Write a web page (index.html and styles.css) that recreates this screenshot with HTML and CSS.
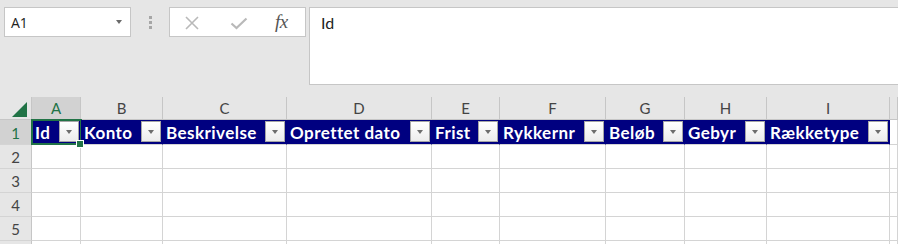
FILE: index.html
```html
<!DOCTYPE html>
<html>
<head>
<meta charset="utf-8">
<link rel="stylesheet" href="styles.css">
</head>
<body>
<div class="app">
  <div class="toolbar">
    <div class="namebox">
      <span class="nb-text">A1</span>
      <span class="caret"></span>
    </div>
    <div class="grip"><i></i><i></i><i></i></div>
    <div class="fxbox">
      <svg class="ico" width="16" height="14" viewBox="0 0 16 14"><path d="M2 1 L14 13 M14 1 L2 13" stroke="#b9b9b9" stroke-width="1.6" fill="none"/></svg>
      <svg class="ico" width="18" height="13" viewBox="0 0 18 13"><path d="M1.5 6.5 L6.5 11 L16.5 1.5" stroke="#b9b9b9" stroke-width="2.2" fill="none"/></svg>
      <span class="fx">fx</span>
    </div>
    <div class="formula"><span class="ftext">Id</span></div>
  </div>

  <div class="sheet">
    <div class="corner"><span class="tri"></span></div>
    <div class="ch sel">A</div>
    <div class="ch">B</div>
    <div class="ch">C</div>
    <div class="ch">D</div>
    <div class="ch">E</div>
    <div class="ch">F</div>
    <div class="ch">G</div>
    <div class="ch">H</div>
    <div class="ch">I</div>
    <div class="ch last"></div>

    <div class="rh sel r1">1</div>
    <div class="th active"><span>Id</span><span class="filter"><b></b></span><span class="selbox"></span><span class="handle"></span></div>
    <div class="th"><span>Konto</span><span class="filter"><b></b></span></div>
    <div class="th"><span>Beskrivelse</span><span class="filter"><b></b></span></div>
    <div class="th"><span>Oprettet dato</span><span class="filter"><b></b></span></div>
    <div class="th"><span>Frist</span><span class="filter"><b></b></span></div>
    <div class="th"><span>Rykkernr</span><span class="filter"><b></b></span></div>
    <div class="th"><span>Beløb</span><span class="filter"><b></b></span></div>
    <div class="th"><span>Gebyr</span><span class="filter"><b></b></span></div>
    <div class="th"><span>Rækketype</span><span class="filter"><b></b></span></div>
    <div class="c r1c"></div>

    <div class="rh">2</div><div class="c"></div><div class="c"></div><div class="c"></div><div class="c"></div><div class="c"></div><div class="c"></div><div class="c"></div><div class="c"></div><div class="c"></div><div class="c"></div>
    <div class="rh">3</div><div class="c"></div><div class="c"></div><div class="c"></div><div class="c"></div><div class="c"></div><div class="c"></div><div class="c"></div><div class="c"></div><div class="c"></div><div class="c"></div>
    <div class="rh">4</div><div class="c"></div><div class="c"></div><div class="c"></div><div class="c"></div><div class="c"></div><div class="c"></div><div class="c"></div><div class="c"></div><div class="c"></div><div class="c"></div>
    <div class="rh">5</div><div class="c"></div><div class="c"></div><div class="c"></div><div class="c"></div><div class="c"></div><div class="c"></div><div class="c"></div><div class="c"></div><div class="c"></div><div class="c"></div>
    <div class="rh"></div><div class="c"></div><div class="c"></div><div class="c"></div><div class="c"></div><div class="c"></div><div class="c"></div><div class="c"></div><div class="c"></div><div class="c"></div><div class="c"></div>
  </div>
</div>
</body>
</html>
```

FILE: styles.css
```css
html, body {
  margin: 0;
  padding: 0;
  background: #e6e6e6;
}
.app {
  width: 898px;
  height: 244px;
  overflow: hidden;
  background: #e6e6e6;
}
.toolbar {
  height: 97px;
  box-sizing: border-box;
  padding: 7px 0 0 4px;
  display: flex;
  align-items: flex-start;
}
.namebox {
  width: 127px;
  height: 30px;
  box-sizing: border-box;
  background: #fff;
  border: 1px solid #c6c6c6;
  display: flex;
  align-items: center;
  justify-content: space-between;
  padding: 0 8px 0 6px;
}
.nb-text {
  font-family: "Open Sans", "Liberation Sans", sans-serif;
  font-size: 14px;
  color: #222;
  padding-top: 1px;
}
.caret {
  width: 0;
  height: 0;
  border-left: 3.5px solid transparent;
  border-right: 3.5px solid transparent;
  border-top: 4px solid #6a6a6a;
}
.grip {
  width: 38px;
  height: 30px;
  display: flex;
  flex-direction: column;
  align-items: center;
  justify-content: center;
  gap: 2px;
}
.grip i {
  display: block;
  width: 3px;
  height: 3px;
  background: #a6a6a6;
}
.fxbox {
  width: 137px;
  height: 30px;
  box-sizing: border-box;
  background: #fff;
  border: 1px solid #c6c6c6;
  display: flex;
  align-items: center;
  padding: 0 0 0 14px;
}
.fxbox .ico:first-child { margin-right: 30px; margin-top: 2px; }
.fxbox .ico:nth-child(2) { margin-right: 27px; margin-top: 3px; }
.fx {
  font-family: "Liberation Serif", "DejaVu Serif", serif;
  font-style: italic;
  font-size: 19px;
  color: #555;
  letter-spacing: -0.5px;
}
.formula {
  margin-left: 3px;
  flex: 1;
  height: 78px;
  box-sizing: border-box;
  background: #fff;
  border: 1px solid #c6c6c6;
  border-right: none;
  padding: 5px 0 0 11px;
}
.ftext {
  font-family: "Lato", "Liberation Sans", sans-serif;
  font-size: 16px;
  color: #222;
}

.sheet {
  display: grid;
  grid-template-columns: 32px 49px 82px 124px 145px 68px 106px 79px 82px 123px 1fr;
  grid-template-rows: 23px 25px 24px 24px 24px 24px 24px;
  font-family: "Lato", "Liberation Sans", sans-serif;
  background: #fff;
}
.sheet > div {
  box-sizing: border-box;
  border-right: 1px solid #d4d4d4;
  border-bottom: 1px solid #d4d4d4;
}
.corner {
  background: #e6e6e6;
  position: relative;
  border-right-color: #c6c6c6 !important;
  border-bottom-color: #c6c6c6 !important;
}
.tri {
  position: absolute;
  right: 4px;
  bottom: 2px;
  width: 0;
  height: 0;
  border-left: 15px solid transparent;
  border-bottom: 15px solid #217346;
}
.ch {
  background: #e6e6e6;
  border-right-color: #c6c6c6 !important;
  border-bottom-color: #c6c6c6 !important;
  display: flex;
  align-items: flex-end;
  justify-content: center;
  padding-bottom: 2px;
  font-size: 15px;
  color: #444;
}
.ch.sel {
  background: #d2d2d2;
  color: #217346;
}
.rh {
  background: #e6e6e6;
  border-right-color: #c6c6c6 !important;
  border-bottom-color: #d4d4d4;
  display: flex;
  align-items: flex-end;
  justify-content: center;
  padding-bottom: 2px;
  font-size: 15px;
  color: #444;
}
.rh.sel {
  background: #d2d2d2;
  color: #217346;
}
.th {
  background: #000080;
  border-right-color: #000080 !important;
  display: flex;
  align-items: center;
  justify-content: space-between;
  padding: 0 1px 1px 3px;
  color: #fff;
  font-weight: 700;
  font-size: 17px;
  letter-spacing: 0.45px;
  position: relative;
}
.th > span:first-child {
  padding-top: 2px;
  white-space: nowrap;
}
.filter {
  width: 20px;
  height: 21px;
  flex: none;
  box-sizing: border-box;
  border: 1px solid #a6a6a6;
  background: linear-gradient(#ffffff, #ececec);
  display: flex;
  align-items: center;
  justify-content: center;
}
.filter b {
  width: 0;
  height: 0;
  border-left: 3.5px solid transparent;
  border-right: 3.5px solid transparent;
  border-top: 4px solid #6d6d6d;
  margin-top: 1px;
}
.selbox {
  position: absolute;
  left: -1px;
  top: -1px;
  width: 51px;
  height: 26px;
  box-sizing: border-box;
  border: 2px solid #217346;
  pointer-events: none;
}
.handle {
  position: absolute;
  left: 45px;
  top: 21px;
  width: 6px;
  height: 6px;
  background: #217346;
  box-shadow: 0 0 0 1px #fff;
  z-index: 2;
}
.c {
  background: #fff;
}
```
